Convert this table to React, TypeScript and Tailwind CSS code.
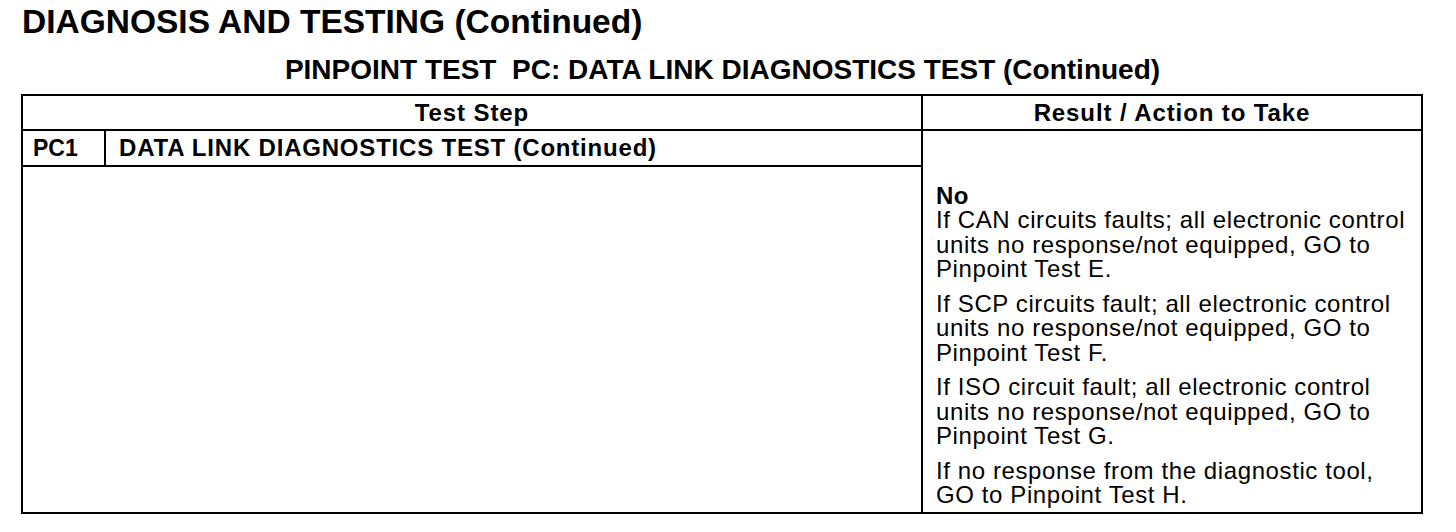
import React from "react";

// each result paragraph, broken where the manual breaks it
const results = [
  ["If CAN circuits faults; all electronic control", "units no response/not equipped, GO to", "Pinpoint Test E."],
  ["If SCP circuits fault; all electronic control", "units no response/not equipped, GO to", "Pinpoint Test F."],
  ["If ISO circuit fault; all electronic control", "units no response/not equipped, GO to", "Pinpoint Test G."],
  ["If no response from the diagnostic tool,", "GO to Pinpoint Test H."],
];

const App = () => {
  return (
    <div className="w-[1456px] h-[532px] bg-white text-black font-['Liberation_Sans',Arial,sans-serif] overflow-hidden">
      {/* Page title */}
      <h1 className="pl-[22px] pt-[6px] text-[33.5px] leading-[32px] font-bold">
        DIAGNOSIS AND TESTING (Continued)
      </h1>

      {/* Test heading */}
      <h2 className="mt-[18px] w-[1445px] text-center text-[28px] leading-[28px] font-bold">
        PINPOINT TEST&nbsp; PC: DATA LINK DIAGNOSTICS TEST (Continued)
      </h2>

      {/* Table */}
      <div className="mt-[10px] ml-[21px] w-[1402px] h-[420px] border-2 border-black flex flex-col">
        <div className="flex h-[35px] border-b-2 border-black shrink-0 text-[24px] font-bold tracking-[0.9px]">
          <div className="w-[900px] border-r-2 border-black flex items-center justify-center">
            Test Step
          </div>
          <div className="flex-1 flex items-center justify-center">
            Result / Action to Take
          </div>
        </div>

        <div className="flex flex-1">
          <div className="w-[900px] border-r-2 border-black">
            <div className="flex h-[36px] border-b-2 border-black text-[24px] font-bold">
              <div className="w-[83px] border-r-2 border-black flex items-center pl-[10px] text-[23px]">PC1</div>
              <div className="flex items-center pl-[13px] tracking-[0.8px]">DATA LINK DIAGNOSTICS TEST (Continued)</div>
            </div>
          </div>

          <div className="flex-1 pl-[13px] pt-[52px]">
            <div className="text-[24px] leading-[25px] font-bold tracking-[0.5px]">No</div>
            <div className="flex flex-col gap-[10px] text-[24px] leading-[24.5px] tracking-[0.6px] whitespace-nowrap">
              {results.map((lines) => (
                <p key={lines[0]}>
                  {lines.map((l, i) => (
                    <React.Fragment key={i}>
                      {i > 0 && <br />}
                      {l}
                    </React.Fragment>
                  ))}
                </p>
              ))}
            </div>
          </div>
        </div>
      </div>
    </div>
  );
};

export default App;
